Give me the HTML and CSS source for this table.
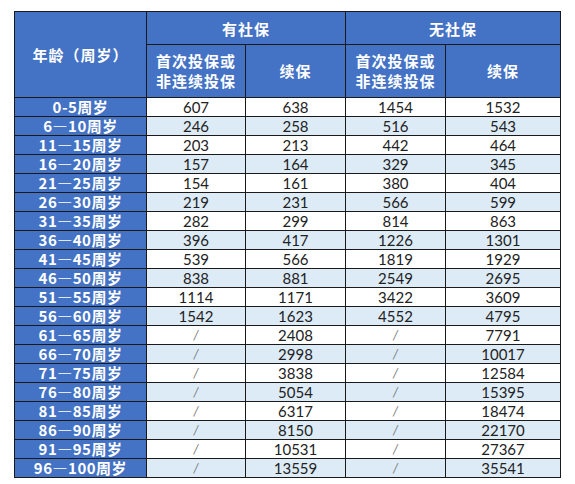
FILE: index.html
```html
<!DOCTYPE html>
<html lang="zh">
<head>
<meta charset="utf-8">
<link rel="stylesheet" href="styles.css">
</head>
<body>
<table class="rates">
<colgroup>
<col class="c-age"><col class="c-a"><col class="c-b"><col class="c-c"><col class="c-d">
</colgroup>
<thead>
<tr class="h1">
<th rowspan="2" class="age-h">年龄（周岁）</th>
<th colspan="2">有社保</th>
<th colspan="2">无社保</th>
</tr>
<tr class="h2">
<th>首次投保或<br>非连续投保</th>
<th>续保</th>
<th>首次投保或<br>非连续投保</th>
<th>续保</th>
</tr>
</thead>
<tbody>
<tr><th>0-5周岁</th><td>607</td><td>638</td><td>1454</td><td>1532</td></tr>
<tr class="alt"><th>6—10周岁</th><td>246</td><td>258</td><td>516</td><td>543</td></tr>
<tr><th>11—15周岁</th><td>203</td><td>213</td><td>442</td><td>464</td></tr>
<tr class="alt"><th>16—20周岁</th><td>157</td><td>164</td><td>329</td><td>345</td></tr>
<tr><th>21—25周岁</th><td>154</td><td>161</td><td>380</td><td>404</td></tr>
<tr class="alt"><th>26—30周岁</th><td>219</td><td>231</td><td>566</td><td>599</td></tr>
<tr><th>31—35周岁</th><td>282</td><td>299</td><td>814</td><td>863</td></tr>
<tr class="alt"><th>36—40周岁</th><td>396</td><td>417</td><td>1226</td><td>1301</td></tr>
<tr><th>41—45周岁</th><td>539</td><td>566</td><td>1819</td><td>1929</td></tr>
<tr class="alt"><th>46—50周岁</th><td>838</td><td>881</td><td>2549</td><td>2695</td></tr>
<tr><th>51—55周岁</th><td>1114</td><td>1171</td><td>3422</td><td>3609</td></tr>
<tr class="alt"><th>56—60周岁</th><td>1542</td><td>1623</td><td>4552</td><td>4795</td></tr>
<tr><th>61—65周岁</th><td class="na">/</td><td>2408</td><td class="na">/</td><td>7791</td></tr>
<tr class="alt"><th>66—70周岁</th><td class="na">/</td><td>2998</td><td class="na">/</td><td>10017</td></tr>
<tr><th>71—75周岁</th><td class="na">/</td><td>3838</td><td class="na">/</td><td>12584</td></tr>
<tr class="alt"><th>76—80周岁</th><td class="na">/</td><td>5054</td><td class="na">/</td><td>15395</td></tr>
<tr><th>81—85周岁</th><td class="na">/</td><td>6317</td><td class="na">/</td><td>18474</td></tr>
<tr class="alt"><th>86—90周岁</th><td class="na">/</td><td>8150</td><td class="na">/</td><td>22170</td></tr>
<tr><th>91—95周岁</th><td class="na">/</td><td>10531</td><td class="na">/</td><td>27367</td></tr>
<tr class="alt"><th>96—100周岁</th><td class="na">/</td><td>13559</td><td class="na">/</td><td>35541</td></tr>
</tbody>
</table>
</body>
</html>
```
FILE: styles.css
```css
html, body {
  margin: 0;
  padding: 0;
  background: #ffffff;
}
body {
  padding: 11px 0 0 14px;
  font-family: Lato, "Noto Sans CJK SC", sans-serif;
}
.rates {
  border-collapse: collapse;
  table-layout: fixed;
  width: 547px;
  border: 1px solid #1a1a1a;
}
.c-age { width: 132px; }
.c-a { width: 99px; }
.c-b { width: 100px; }
.c-c { width: 100px; }
.c-d { width: 115px; }
.rates th, .rates td {
  border: 1px solid #1a1a1a;
  padding: 0;
  text-align: center;
  vertical-align: middle;
  white-space: nowrap;
  overflow: hidden;
}
.rates th {
  background: #4472c4;
  color: #ffffff;
  font-family: "Noto Sans CJK SC", sans-serif;
  font-weight: bold;
  font-size: 15px;
  letter-spacing: 1px;
}
.h1 th { height: 32px; }
.h2 th { height: 52px; line-height: 20px; }
.rates tbody th {
  height: 18px;
  line-height: 18px;
  font-size: 15px;
  letter-spacing: 0.5px;
}
.rates td {
  height: 18px;
  line-height: 18px;
  font-size: 15px;
  color: #222222;
  background: #ffffff;
}
.rates tr.alt td { background: #ddebf7; }
.rates td.na { color: #777777; font-size: 13px; font-style: italic; }
```
